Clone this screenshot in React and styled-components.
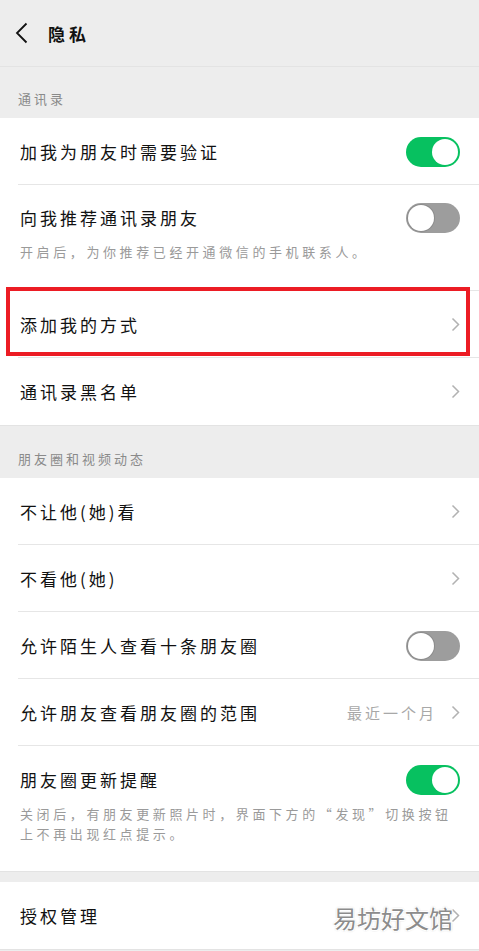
import React from "react";
import styled, { createGlobalStyle } from "styled-components";

const Global = createGlobalStyle`
  * { box-sizing: border-box; }
  body {
    margin: 0;
    background: #ededed;
    font-family: "Noto Sans CJK SC", "Noto Sans", sans-serif;
  }
`;

const Chevron = () => (
  <svg width="9" height="15" viewBox="0 0 9 15">
    <path d="M1.5 1.5 L7.5 7.5 L1.5 13.5" fill="none" stroke="#b2b2b2" strokeWidth="1.5" />
  </svg>
);

const App = () => {
  return (
    <Page>
      <Global />
      <Header>
        <svg width="14" height="22" viewBox="0 0 14 22">
          <path d="M11.5 1.5 L2 11 L11.5 20.5" fill="none" stroke="#111" strokeWidth="1.8" />
        </svg>
        <Title>隐私</Title>
      </Header>

      <SectionLabel>通讯录</SectionLabel>
      <Group>
        <Row>
          <Label>加我为朋友时需要验证</Label>
          <Toggle on />
        </Row>
        <TallRow pt={20} pb={29}>
          <Top>
            <Label>向我推荐通讯录朋友</Label>
            <Toggle />
          </Top>
          <Desc>开启后，为你推荐已经开通微信的手机联系人。</Desc>
        </TallRow>
        <Row>
          <Highlight />
          <Label>添加我的方式</Label>
          <Chevron />
        </Row>
        <Row last>
          <Label>通讯录黑名单</Label>
          <Chevron />
        </Row>
      </Group>

      <SectionLabel second>朋友圈和视频动态</SectionLabel>
      <Group>
        <Row>
          <Label>不让他(她)看</Label>
          <Chevron />
        </Row>
        <Row>
          <Label>不看他(她)</Label>
          <Chevron />
        </Row>
        <Row>
          <Label>允许陌生人查看十条朋友圈</Label>
          <Toggle />
        </Row>
        <Row>
          <Label>允许朋友查看朋友圈的范围</Label>
          <Right>
            <Value>最近一个月</Value>
            <Chevron />
          </Right>
        </Row>
        <TallRow pt={21} pb={27} last>
          <Top>
            <Label>朋友圈更新提醒</Label>
            <Toggle on />
          </Top>
          <Desc>
            关闭后，有朋友更新照片时，界面下方的“发现”切换按钮
            <br />
            上不再出现红点提示。
          </Desc>
        </TallRow>
      </Group>

      <Spacer />
      <Group>
        <Row last>
          <Label>授权管理</Label>
          <Chevron />
          <Watermark>易坊好文馆</Watermark>
        </Row>
      </Group>
    </Page>
  );
};
export default App;

const Page = styled.div`
  width: 479px;
  min-height: 951px;
  background: #ededed;
  overflow: hidden;
`;
const Header = styled.div`
  height: 67px;
  display: flex;
  align-items: center;
  padding-left: 15px;
  gap: 19px;
  border-bottom: 1px solid #e3e3e3;
  svg {
    margin-top: -1px;
  }
`;
const Title = styled.div`
  font-size: 17px;
  font-weight: bold;
  letter-spacing: 4px;
  color: #111;
`;
const SectionLabel = styled.div`
  padding: ${(p) => (p.second ? "24px" : "23px")} 18px 10px;
  font-size: 13px;
  line-height: 18px;
  letter-spacing: 3px;
  color: #8a8a8a;
`;
const Group = styled.div`
  background: #fff;
  border-bottom: 1px solid #e3e3e3;
`;
const Divided = styled.div`
  position: relative;
  &::after {
    content: "";
    display: ${(p) => (p.last ? "none" : "block")};
    position: absolute;
    left: 18px;
    right: 0;
    bottom: 0;
    height: 1px;
    background: #e6e6e6;
  }
`;
const Row = styled(Divided)`
  display: flex;
  justify-content: space-between;
  align-items: center;
  height: 67px;
  padding: 0 19px 0 20px;
`;
const TallRow = styled(Divided)`
  padding: ${(p) => p.pt}px 19px ${(p) => p.pb}px 20px;
`;
const Top = styled.div`
  display: flex;
  justify-content: space-between;
  align-items: center;
  height: 26px;
`;
const Label = styled.div`
  font-size: 17px;
  line-height: 26px;
  letter-spacing: 3px;
  color: #111;
`;
const Desc = styled.div`
  margin-top: 11px;
  font-size: 13px;
  line-height: 20px;
  letter-spacing: 3.6px;
  color: #9a9a9a;
  white-space: nowrap;
`;
const Right = styled.div`
  display: flex;
  align-items: center;
  gap: 14px;
`;
const Value = styled.div`
  font-size: 15px;
  letter-spacing: 3px;
  color: #a8a8a8;
`;
const Track = styled.div`
  flex: none;
  width: 54px;
  height: 30px;
  border-radius: 15px;
  padding: 2px;
  display: flex;
  justify-content: ${(p) => (p.on ? "flex-end" : "flex-start")};
  background: ${(p) => (p.on ? "#07c160" : "#9d9d9d")};
`;
const Knob = styled.div`
  width: 26px;
  height: 26px;
  border-radius: 50%;
  background: #fff;
  box-shadow: ${(p) => (p.on ? "none" : "0 0 0 1px #8c8c8c")};
`;
const Toggle = ({ on }) => (
  <Track on={on ? 1 : 0}>
    <Knob on={on ? 1 : 0} />
  </Track>
);
const Highlight = styled.div`
  position: absolute;
  left: 6px;
  right: 9px;
  top: -4px;
  bottom: 2px;
  border: 4px solid #ec1c24;
  pointer-events: none;
`;
const Spacer = styled.div`
  height: 10px;
`;
const Watermark = styled.div`
  position: absolute;
  right: 26px;
  top: 50%;
  transform: translateY(-45%);
  font-size: 24px;
  color: #8c8c8c;
  text-shadow: 1px 1px 0 #fff, -1px -1px 0 #fff, 1px -1px 0 #fff, -1px 1px 0 #fff,
    0 0 2px #555;
`;
